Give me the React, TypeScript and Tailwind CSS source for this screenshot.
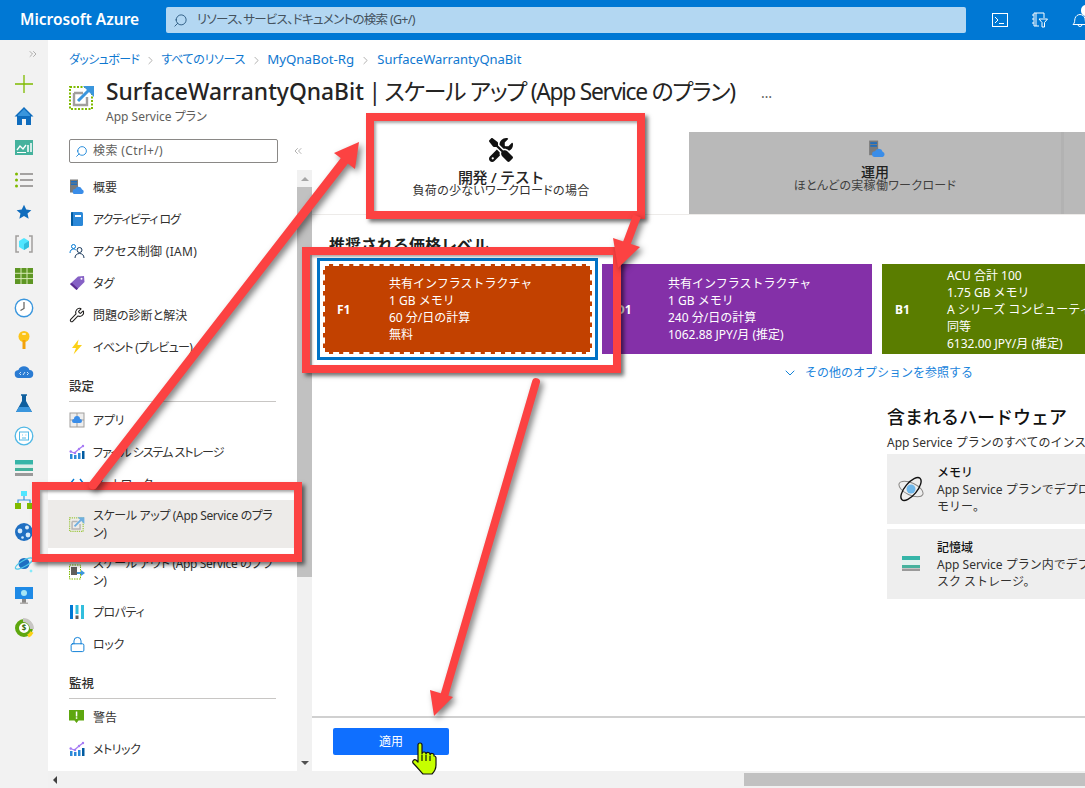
import React from "react";
import { Wrench, Lock, ChevronDown, Search, ChevronsRight, ChevronsLeft, ChevronRight } from "lucide-react";
import { FaScrewdriverWrench } from "react-icons/fa6";

const ScaleIcon = ({ size = 16, dim = false }: { size?: number; dim?: boolean }) => (
  <svg width={size} height={size} viewBox="0 0 26 26" className={dim ? "opacity-70" : ""}>
    <rect x="1" y="3" width="22" height="22" fill="none" stroke="#7fba00" strokeWidth="2" strokeDasharray="2 1.5" />
    <path d="M5 9h9M5 9v12h13v-8" fill="none" stroke="#a19f9d" strokeWidth="2.4" />
    <path d="M9 17L20 6" stroke="#3a96dd" strokeWidth="3" />
    <path d="M14 2h11v11z" fill="#3a96dd" />
  </svg>
);

const ScaleOut = () => (
  <svg width="16" height="16" viewBox="0 0 16 16">
    <rect x="0.5" y="1" width="11" height="14" fill="none" stroke="#7fba00" strokeWidth="1" strokeDasharray="1.5 1" />
    <rect x="2" y="3" width="6" height="8" fill="#605e5c" />
    <path d="M8 9h5" stroke="#3a96dd" strokeWidth="2" />
    <path d="M12 6l4 3-4 3z" fill="#3a96dd" />
  </svg>
);

const CloudServer = ({ size = 16 }: { size?: number }) => (
  <svg width={size} height={size} viewBox="0 0 16 16">
    <rect x="1" y="0.5" width="8" height="13" fill="#7a7a7a" />
    <rect x="2" y="2" width="6" height="1.5" fill="#1b6ec2" />
    <rect x="2" y="4.5" width="6" height="1.5" fill="#1b6ec2" />
    <path d="M6 15a2.5 2.5 0 0 1 .2-5 3.6 3.6 0 0 1 6.8.4A2.4 2.4 0 0 1 13 15z" fill="#3a8de8" />
  </svg>
);

const Chart = () => (
  <svg width="16" height="16" viewBox="0 0 16 16">
    <rect x="1" y="10" width="2.5" height="5" fill="#2b88d8" />
    <rect x="5" y="11" width="2.5" height="4" fill="#2b88d8" />
    <rect x="9" y="9" width="2.5" height="6" fill="#2b88d8" />
    <rect x="13" y="7" width="2.5" height="8" fill="#005ba1" />
    <path d="M1.5 7.5L5.5 9l4.5-4 4-3" fill="none" stroke="#a67af4" strokeWidth="1.2" />
    <circle cx="1.7" cy="7.5" r="1.2" fill="#a67af4" />
    <circle cx="6" cy="9" r="1.2" fill="#a67af4" />
    <circle cx="10" cy="5" r="1.2" fill="#a67af4" />
    <circle cx="14" cy="2" r="1.2" fill="#a67af4" />
  </svg>
);

const menuIcons: Record<string, React.ReactNode> = {
  overview: <CloudServer />,
  log: (
    <svg width="16" height="16" viewBox="0 0 16 16">
      <rect x="2" y="1" width="12" height="14" rx="1.5" fill="#2b88d8" />
      <rect x="2" y="1" width="2" height="14" rx="1" fill="#005ba1" />
      <rect x="6" y="4" width="6" height="2" fill="#fff" />
    </svg>
  ),
  iam: (
    <svg width="16" height="16" viewBox="0 0 16 16" fill="none" stroke="#0078d4" strokeWidth="1">
      <circle cx="4.5" cy="3.5" r="2" />
      <path d="M1 10c0-2.5 1.500-4 3.500-4 1 0 1.700.3 2.300.9" />
      <circle cx="10.500" cy="7" r="2.500" stroke="#1b3a5c" />
      <path d="M6 15c0-3 2-4.500 4.500-4.500S15 12 15 15" stroke="#1b3a5c" />
    </svg>
  ),
  tag: (
    <svg width="16" height="16" viewBox="0 0 16 16">
      <path d="M1 9L9 1.500 15 1l.5 6-8 8z" fill="#8661c5" />
      <path d="M1 9l6.500 6 1.500-1.500L3 8z" fill="#5c2d91" />
      <circle cx="12.500" cy="3.700" r="1" fill="#fff" />
    </svg>
  ),
  wrench: <Wrench size={16} strokeWidth={1.6} color="#201f1e" />,
  bolt: (
    <svg width="16" height="16" viewBox="0 0 16 16">
      <path d="M9.500 0.500L3 9h4l-2.500 6.500L13 6H8.500z" fill="#fcd116" />
    </svg>
  ),
  app: (
    <svg width="16" height="16" viewBox="0 0 16 16">
      <rect x="1" y="1" width="14" height="14" fill="#eee" stroke="#a19f9d" />
      <path d="M1 8h14M8 1v14" stroke="#a19f9d" />
      <path d="M5 11a2 2 0 0 1 0-4 3 3 0 0 1 6 0 2 2 0 0 1 0 4z" fill="#3a8de8" />
    </svg>
  ),
  chart: <Chart />,
  network: (
    <svg width="16" height="16" viewBox="0 0 16 16" fill="none" stroke="#0078d4" strokeWidth="1.400">
      <path d="M5 3L1 8l4 5M11 3l4 5-4 5" />
    </svg>
  ),
  up: <ScaleIcon dim />,
  out: <ScaleOut />,
  props: (
    <svg width="16" height="16" viewBox="0 0 16 16">
      <rect x="1" y="1" width="3" height="14" fill="#0078d4" />
      <rect x="6.500" y="1" width="3" height="9" fill="#32bedd" />
      <rect x="6.500" y="11.500" width="3" height="3.500" fill="#605e5c" />
      <rect x="12" y="1" width="3" height="14" fill="#32bedd" />
    </svg>
  ),
  lock: <Lock size={17} strokeWidth={1.3} color="#0078d4" />,
  alert: (
    <svg width="16" height="16" viewBox="0 0 16 16">
      <path d="M0 1h15v10.500H9.500L7.500 14l-2-2.500H0z" fill="#5ea70f" />
      <rect x="6.800" y="2.500" width="1.500" height="5" fill="#fff" />
      <rect x="6.800" y="8.300" width="1.500" height="1.500" fill="#fff" />
    </svg>
  ),
};

type MenuEntry = { heading?: string; label?: string; icon?: string; active?: boolean; two?: boolean; tr?: string };

const menu: MenuEntry[] = [
  { label: "概要", icon: "overview" },
  { label: "アクティビティ ログ", icon: "log", tr: "tracking-[-1px]" },
  { label: "アクセス制御 (IAM)", icon: "iam", tr: "tracking-[0.3px]" },
  { label: "タグ", icon: "tag" },
  { label: "問題の診断と解決", icon: "wrench" },
  { label: "イベント (プレビュー)", icon: "bolt", tr: "tracking-[-0.7px]" },
  { heading: "設定" },
  { label: "アプリ", icon: "app", tr: "tracking-[-0.3px]" },
  { label: "ファイル システム ストレージ", icon: "chart", tr: "tracking-[-1px]" },
  { label: "ネットワーク", icon: "network", tr: "tracking-[-0.7px]" },
  { label: "スケール アップ (App Service のプラ\nン)", icon: "up", active: true, two: true, tr: "tracking-[-0.35px]" },
  { label: "スケール アウト (App Service のプラ\nン)", icon: "out", two: true, tr: "tracking-[-0.35px]" },
  { label: "プロパティ", icon: "props", tr: "tracking-[-0.5px]" },
  { label: "ロック", icon: "lock", tr: "tracking-[-0.3px]" },
  { heading: "監視" },
  { label: "警告", icon: "alert" },
  { label: "メトリック", icon: "chart", tr: "tracking-[-0.5px]" },
];

const railIcons: React.ReactNode[] = [
  <svg width="20" height="20" viewBox="0 0 20 20"><path d="M10 1v18M1 10h18" stroke="#7fba00" strokeWidth="1.300" /></svg>,
  <svg width="20" height="20" viewBox="0 0 20 20"><path d="M10 1L0.500 10.500H3V19h5v-6h4v6h5v-8.500h2.500z" fill="#0f6cbd" /><path d="M10 3L4 9v1h12V9z" fill="#3a96dd" /></svg>,
  <svg width="20" height="20" viewBox="0 0 20 20"><rect x="1" y="2" width="18" height="15" fill="#45b29d" /><path d="M3 12l3-4 3 3 3-4" fill="none" stroke="#fff" strokeWidth="1.300" /><path d="M14 7v7M17 5v9" stroke="#fff" strokeWidth="1.500" /><rect x="3" y="14" width="9" height="1" fill="#fff" /></svg>,
  <svg width="20" height="20" viewBox="0 0 20 20"><circle cx="2.500" cy="4" r="1.500" fill="#7fba00" /><circle cx="2.500" cy="10" r="1.500" fill="#7fba00" /><circle cx="2.500" cy="16" r="1.500" fill="#7fba00" /><path d="M6 4h13M6 10h13M6 16h13" stroke="#8a8886" strokeWidth="1.500" /></svg>,
  <svg width="16" height="16" viewBox="0 0 20 20"><path d="M10 1l2.800 6 6.400.7-4.800 4.300 1.400 6.400L10 15.100l-5.800 3.300L5.600 12 .8 7.700 7.200 7z" fill="#0f6cbd" /></svg>,
  <svg width="20" height="20" viewBox="0 0 20 20"><path d="M5 2H2v16h3M15 2h3v16h-3" fill="none" stroke="#a19f9d" strokeWidth="1.500" /><path d="M10 4l5 3v6l-5 3-5-3V7z" fill="#50e6ff" /><path d="M10 10l5-3v6l-5 3z" fill="#32bedd" /></svg>,
  <svg width="20" height="20" viewBox="0 0 20 20"><rect x="1" y="2" width="18" height="16" fill="#5e9624" /><path d="M7 2v16M13 2v16M1 7.300h18M1 12.600h18" stroke="#d6eab4" /></svg>,
  <svg width="20" height="20" viewBox="0 0 20 20"><circle cx="10" cy="10" r="8.700" fill="#fff" stroke="#3a96dd" strokeWidth="1.400" /><path d="M10 4v6.500L6.500 12.500" fill="none" stroke="#605e5c" strokeWidth="1.200" /></svg>,
  <svg width="20" height="20" viewBox="0 0 20 20"><circle cx="10" cy="6.500" r="5.500" fill="#fcc419" /><rect x="8.500" y="10" width="3" height="9" fill="#f2a20c" /><rect x="8" y="3" width="4" height="2" rx="1" fill="#fff1b8" /></svg>,
  <svg width="20" height="20" viewBox="0 0 20 20"><path d="M5 16a4 4 0 0 1-.6-8A6 6 0 0 1 15.500 8 4 4 0 0 1 15 16z" fill="#2b7cd3" /><path d="M7 10l-1.500 1.500L7 13M13 10l1.500 1.500L13 13M9 13l2-3" fill="none" stroke="#cfe6fa" /></svg>,
  <svg width="20" height="20" viewBox="0 0 20 20"><path d="M8 1h4v6l6 11H2L8 7z" fill="#0f5f9e" /><path d="M5 13h10l3 5H2z" fill="#3a96dd" /><path d="M7 1h6" stroke="#0f5f9e" strokeWidth="1.500" /></svg>,
  <svg width="20" height="20" viewBox="0 0 20 20"><circle cx="10" cy="10" r="8.800" fill="#fff" stroke="#50b8e6" strokeWidth="1.300" /><rect x="5.500" y="6" width="9" height="8" fill="none" stroke="#50b8e6" /><path d="M8 9h.8M11.500 9h.8M8 12h4" stroke="#50b8e6" /></svg>,
  <svg width="20" height="20" viewBox="0 0 20 20"><rect x="1" y="2" width="18" height="4.500" fill="#36b5a8" /><rect x="1" y="7" width="18" height="5" fill="#dceee9" /><rect x="1" y="10" width="18" height="3" fill="#45b29d" /><rect x="1" y="15" width="18" height="3" fill="#9a9a9a" /></svg>,
  <svg width="20" height="20" viewBox="0 0 20 20"><rect x="7" y="1" width="6" height="5" fill="#50e6ff" /><path d="M10 6v4M4 13v-3h12v3" fill="none" stroke="#3a96dd" strokeWidth="1.200" /><rect x="1" y="13" width="6" height="6" fill="#7fba00" /><rect x="13" y="13" width="6" height="6" fill="#7fba00" /></svg>,
  <svg width="20" height="20" viewBox="0 0 20 20"><circle cx="10" cy="10" r="9" fill="#1f6fc2" /><circle cx="6" cy="9" r="2.400" fill="#d7ebfb" /><circle cx="13" cy="5.500" r="2" fill="#d7ebfb" /><circle cx="14" cy="13" r="2.400" fill="#d7ebfb" /><circle cx="8.500" cy="15.500" r="1.300" fill="#d7ebfb" /></svg>,
  <svg width="20" height="20" viewBox="0 0 20 20"><circle cx="10" cy="9.500" r="5.500" fill="#1f6fc2" /><ellipse cx="10" cy="9.500" rx="9.800" ry="3" fill="none" stroke="#50c8ea" strokeWidth="1.200" transform="rotate(-30 10 9.500)" /><path d="M17 15l.5 1.500L19 17l-1.500.5L17 19l-.5-1.500L15 17l1.500-.5z" fill="#50e6ff" /></svg>,
  <svg width="20" height="20" viewBox="0 0 20 20"><rect x="1" y="1" width="18" height="12" fill="#1e8ae6" /><circle cx="10" cy="7" r="3" fill="#a5e6f5" /><rect x="8" y="13" width="4" height="4" fill="#8a8886" /><rect x="6" y="16.500" width="8" height="1.500" fill="#b0aeac" /></svg>,
  <svg width="20" height="20" viewBox="0 0 20 20"><circle cx="10" cy="10" r="7" fill="#fff" stroke="#5ea70f" strokeWidth="4" /><path d="M10 1a9 9 0 0 1 9 9" fill="none" stroke="#c8c6c4" strokeWidth="4" transform="translate(-1 1)" /><path d="M18 14a9 9 0 0 1-4 4" fill="none" stroke="#fcd116" strokeWidth="3.500" /><text x="10" y="13" textAnchor="middle" fontSize="8" fontWeight="700" fill="#3b6e0a">$</text></svg>,
];

const Line = ({ children }: { children: React.ReactNode }) => <div className="whitespace-nowrap">{children}</div>;

const Tier = ({ code, lines, color, selected, leftPad }: { code: string; lines: string[]; color: string; selected?: boolean; leftPad: string }) => (
  <div className={`${color} h-[90px] flex items-center text-white text-[12px] leading-[17px] ${selected ? "border-2 border-dashed border-white w-[269px]" : ""} ${leftPad}`}>
    <div className="w-[52px] font-bold shrink-0">{code}</div>
    <div>
      {lines.map((l) => (
        <Line key={l}>{l}</Line>
      ))}
    </div>
  </div>
);

const Hw = ({ icon, title, l1, l2 }: { icon: React.ReactNode; title: string; l1: string; l2: string }) => (
  <div className="h-[70px] bg-[#eeeeee] flex items-center w-[500px] text-[12px] leading-[17px] text-[#323130]">
    <div className="w-[50px] flex justify-center pr-[2px] shrink-0">{icon}</div>
    <div>
      <div className="text-[#111] font-medium">{title}</div>
      <Line>{l1}</Line>
      <Line>{l2}</Line>
    </div>
  </div>
);

const Red = ({ cls }: { cls: string }) => (
  <div className={`absolute border-[8px] border-[#fc4242] shadow-[3px_3px_4px_rgba(0,0,0,0.55),inset_2px_2px_3px_rgba(0,0,0,0.35)] ${cls}`} />
);

export default function App() {
  return (
    <div
      className="relative w-[1085px] h-[788px] overflow-hidden flex flex-col bg-white text-[#323130] text-[12px] [font-feature-settings:'palt']"
      style={{ fontFamily: '"Noto Sans", "Noto Sans CJK JP", sans-serif' }}
    >
      {/* top bar */}
      <header className="h-10 shrink-0 bg-[#0078d4] flex items-center pl-5 text-white">
        <div className="w-[146px] shrink-0 text-[15.5px] font-semibold whitespace-nowrap">Microsoft Azure</div>
        <div className="w-[800px] h-[26px] shrink-0 bg-[#b3d7f2] rounded-[2px] flex items-center pl-[7px] gap-[9px] text-[#44525e] text-[12.5px] tracking-[-0.7px]">
          <Search size={15} strokeWidth={1.4} color="#24527a" className="-scale-x-100" />
          <span>リソース、サービス、ドキュメントの検索 (G+/)</span>
        </div>
        <div className="flex items-center gap-6 ml-[26px] shrink-0">
          <svg width="16" height="14" viewBox="0 0 16 14" fill="none" stroke="#fff">
            <rect x="0.500" y="0.500" width="15" height="13" />
            <path d="M3 4l3 3-3 3M7 10.500h5" />
          </svg>
          <svg width="16" height="16" viewBox="0 0 16 16" fill="none" stroke="#fff">
            <path d="M2 1h10v5M2 1v13h5M4 1v13M0 3h2M0 7h2M0 11h2" />
            <path d="M7 7h8.500l-3 3.500V15H10v-4.500z" />
          </svg>
          <svg width="16" height="16" viewBox="0 0 16 16" fill="none" stroke="#fff">
            <path d="M1 12.500c2-1.500 1.500-4 2-6C3.500 4 6 2.500 8 2.500s4.500 1.500 5 4 0 4.500 2 6zM6 12.500a2 2 0 0 0 4 0" />
          </svg>
        </div>
      </header>
      <div className="absolute top-[5px] left-[1081px] w-[10px] h-[11px] rounded-full bg-white" />

      <div className="flex flex-1 min-h-0">
        {/* rail */}
        <aside className="w-12 shrink-0 bg-[#f2f2f2] flex flex-col items-center">
          <div className="h-[28px] w-full flex items-center justify-end pr-[9px]">
            <ChevronsRight size={12} color="#8a8886" strokeWidth={1.3} />
          </div>
          {railIcons.map((ic, i) => (
            <div key={i} className="h-8 w-full flex items-center justify-center shrink-0">
              {ic}
            </div>
          ))}
        </aside>

        {/* blade */}
        <main className="flex-1 min-w-0 flex flex-col">
          <div className="h-[91px] shrink-0 pl-[21px] pt-[12px] relative">
            <nav className="flex items-center h-4 text-[#0f78d0] whitespace-nowrap">
              <span className="text-[12px] tracking-[-0.6px]">ダッシュボード</span>
              <ChevronRight size={13} color="#8a8886" className="mx-[4.5px]" strokeWidth={1.2} />
              <span className="text-[12px] tracking-[-0.3px]">すべてのリソース</span>
              <ChevronRight size={13} color="#8a8886" className="mx-[4.5px]" strokeWidth={1.2} />
              <span className="text-[13.3px]">MyQnaBot-Rg</span>
              <ChevronRight size={13} color="#8a8886" className="mx-[5px]" strokeWidth={1.2} />
              <span className="text-[13px]">SurfaceWarrantyQnaBit</span>
            </nav>
            <div className="flex items-start mt-[10px]">
              <div className="w-[37px] pt-[6px] shrink-0">
                <ScaleIcon size={26} />
              </div>
              <div>
                <div className="flex items-center h-[28px] whitespace-nowrap">
                  <h1 className="text-[22.8px] leading-[28px] text-[#252423]">
                    <span className="font-medium">SurfaceWarrantyQnaBit</span>
                    <span className="tracking-[-1.27px]"> | スケール アップ (App Service のプラン)</span>
                  </h1>
                  <span className="ml-[26px] text-[14px] text-[#605e5c] tracking-[1px]">…</span>
                </div>
                <div className="text-[12px] leading-[16px] text-[#605e5c] mt-[3px]">App Service プラン</div>
              </div>
            </div>
          </div>

          <div className="flex flex-1 min-h-0">
            {/* menu column */}
            <div className="w-[264px] shrink-0 flex flex-col">
              <div className="h-[39px] shrink-0 flex items-start pt-2 pl-[21px] gap-[14px]">
                <div className="w-[209px] h-6 border border-[#8a8886] rounded-[2px] flex items-center pl-[5px] gap-[5px] text-[#605e5c] tracking-[0.4px]">
                  <Search size={13} strokeWidth={1.5} color="#0078d4" className="-scale-x-100" />
                  <span>検索 (Ctrl+/)</span>
                </div>
                <ChevronsLeft size={12} color="#8a8886" className="mt-[6px]" strokeWidth={1.3} />
              </div>
              <div className="flex flex-1 min-h-0">
                <div className="w-[249px] shrink-0 overflow-hidden pt-px">
                  {menu.map((m, i) =>
                    m.heading ? (
                      <div key={i} className="h-[39px] mx-[21px] mb-[2px] flex items-end pb-[4px] border-b border-[#c8c6c4] text-[12.5px] font-medium text-[#323130]">
                        {m.heading}
                      </div>
                    ) : (
                      <div
                        key={i}
                        className={`flex items-center pl-[21px] ${m.two ? "h-12" : "h-8"} ${m.active ? "bg-[#edebe9]" : ""}`}
                      >
                        <div className="w-6 shrink-0 flex items-center">{menuIcons[m.icon as string]}</div>
                        <div className={`text-[12px] leading-[17px] whitespace-pre-line text-[#323130] ${m.tr ?? ""}`}>{m.label}</div>
                      </div>
                    )
                  )}
                </div>
                <div className="w-[15px] shrink-0 bg-[#f1f1f1] flex flex-col items-center">
                  <div className="h-[17px] flex items-center justify-center shrink-0">
                    <div className="w-0 h-0 border-x-[4px] border-x-transparent border-b-[4px] border-b-[#a6a6a6]" />
                  </div>
                  <div className="w-full h-[390px] bg-[#c1c1c1] shrink-0" />
                  <div className="flex-1" />
                  <div className="h-[17px] flex items-center justify-center shrink-0">
                    <div className="w-0 h-0 border-x-[4px] border-x-transparent border-t-[4px] border-t-[#505050]" />
                  </div>
                </div>
              </div>
            </div>

            {/* content */}
            <section className="flex-1 min-w-0 flex flex-col [font-feature-settings:normal]">
              <div className="flex h-[84px] shrink-0 border-b border-[#edebe9] pl-px">
                <div className="w-[376px] shrink-0 flex flex-col items-center pt-[7px]">
                  <FaScrewdriverWrench size={24} color="#111" />
                  <div className="text-[15px] leading-[16px] font-medium text-[#252423] mt-[7px] tracking-[-0.3px]">開発 / テスト</div>
                  <div className="text-[12px] leading-[14px] text-[#323130] -mt-[1px] tracking-[0.3px] [font-feature-settings:'palt']">負荷の少ないワークロードの場合</div>
                </div>
                <div className="w-[372px] shrink-0 flex flex-col items-center pt-[8px] mt-px bg-[#b9b9b9]">
                  <div className="ml-1"><CloudServer size={18} /></div>
                  <div className="text-[14px] leading-[16px] text-[#201f1e] font-medium mt-[6px]">運用</div>
                  <div className="text-[12px] leading-[14px] text-[#403f3e] -mt-[1px] whitespace-nowrap tracking-[0.3px] [font-feature-settings:'palt']">ほとんどの実稼働ワークロード</div>
                </div>
                <div className="flex-1 mt-px bg-[#b9b9b9] border-l-[3px] border-[#b2b2b2]" />
              </div>

              <div className="flex-1 min-h-0 overflow-hidden">
                <h2 className="ml-[17px] mt-[20px] text-[16px] leading-[20px] font-bold text-[#201f1e]">推奨される価格レベル</h2>
                <div className="flex items-center mt-[3px] ml-[5px]">
                  <div className="border-[3px] border-[#0072c6] p-[3px] shrink-0">
                    <Tier
                      code="F1"
                      color="bg-[#c24100]"
                      selected
                      leftPad="pl-[12px]"
                      lines={["共有インフラストラクチャ", "1 GB メモリ", "60 分/日の計算", "無料"]}
                    />
                  </div>
                  <div className="w-[270px] ml-[4px] shrink-0">
                    <Tier
                      code="D1"
                      color="bg-[#8430a8]"
                      leftPad="pl-[14px]"
                      lines={["共有インフラストラクチャ", "1 GB メモリ", "240 分/日の計算", "1062.88 JPY/月 (推定)"]}
                    />
                  </div>
                  <div className="w-[300px] ml-[10px] shrink-0">
                    <Tier
                      code="B1"
                      color="bg-[#5a7d00]"
                      leftPad="pl-[13px]"
                      lines={["ACU 合計 100", "1.75 GB メモリ", "A シリーズ コンピューティング", "同等", "6132.00 JPY/月 (推定)"]}
                    />
                  </div>
                </div>
                <div className="flex items-center ml-[470px] mt-[3px] h-[20px] gap-[7px] text-[12px] text-[#1b84dc] whitespace-nowrap">
                  <ChevronDown size={16} strokeWidth={1.4} color="#0078d4" />
                  <span>その他のオプションを参照する</span>
                </div>
                <div className="ml-[575px] mt-[22px]">
                  <h3 className="text-[18px] leading-[24px] font-medium text-[#111]">含まれるハードウェア</h3>
                  <div className="mt-[6px] leading-[16px] whitespace-nowrap">App Service プランのすべてのインスタンスで利用できるハードウェア</div>
                  <div className="flex flex-col gap-[5px] mt-[3px]">
                    <Hw
                      title="メモリ"
                      l1="App Service プランでデプロイされたすべてのアプリで共有される専用のメ"
                      l2="モリー。"
                      icon={
                        <svg width="26" height="26" viewBox="0 0 26 26" fill="none">
                          <ellipse cx="13" cy="13" rx="13" ry="6" stroke="#8a8886" transform="rotate(25 13 13)" />
                          <circle cx="13" cy="13" r="4.500" fill="#6fb7ea" />
                          <ellipse cx="13" cy="13" rx="14" ry="6" stroke="#111" strokeWidth="1.400" transform="rotate(-50 13 13)" />
                        </svg>
                      }
                    />
                    <Hw
                      title="記憶域"
                      l1="App Service プラン内でデプロイされたすべてのアプリで共有される専用のディ"
                      l2="スク ストレージ。"
                      icon={
                        <svg width="18" height="16" viewBox="0 0 18 16">
                          <rect width="18" height="4" fill="#36b5a8" />
                          <rect y="4" width="18" height="5" fill="#e1f2ee" />
                          <rect y="9" width="18" height="3" fill="#45b29d" />
                          <rect y="12.500" width="18" height="2.500" fill="#9a9a9a" />
                        </svg>
                      }
                    />
                  </div>
                </div>
              </div>

              <div className="h-[55px] shrink-0 border-t-2 border-[#d0d0d0] pl-[21px] pt-[10px]">
                <button className="w-[116px] h-[27px] rounded-[2px] bg-[#0f6fff] text-white text-[12px]">適用</button>
              </div>
            </section>
          </div>

          {/* bottom scrollbar */}
          <div className="h-[17px] shrink-0 bg-[#f1f1f1] flex items-center">
            <div className="w-0 h-0 ml-[5px] border-y-[4px] border-y-transparent border-r-[4px] border-r-[#404040]" />
            <div className="ml-auto w-[341px] h-[13px] bg-[#c1c1c1]" />
          </div>
        </main>
      </div>

      {/* annotations laid over the page */}
      <Red cls="left-[366px] top-[113px] w-[279px] h-[106px]" />
      <Red cls="left-[302px] top-[247px] w-[319px] h-[126px] border-[7px]" />
      <Red cls="left-[32px] top-[482px] w-[270px] h-[80px]" />
      <svg width="1085" height="788" viewBox="0 0 1085 788" className="absolute left-0 top-0 pointer-events-none drop-shadow-[3px_3px_3px_rgba(0,0,0,0.5)]">
        <path d="M93 485L345 160" stroke="#fc4242" strokeWidth="9" strokeLinecap="round" fill="none" />
        <path d="M359 142L334 153 355 169z" fill="#fc4242" />
        <path d="M637 216L622 256" stroke="#fc4242" strokeWidth="8" fill="none" />
        <path d="M618 268L640 247 613 238z" fill="#fc4242" />
        <path d="M536 382L443 700" stroke="#fc4242" strokeWidth="8" strokeLinecap="round" fill="none" />
        <path d="M434 716L430 690 453 697z" fill="#fc4242" />
      </svg>
      {/* hand pointer */}
      <svg width="28" height="34" viewBox="0 0 28 34" className="absolute left-[410px] top-[742px]">
        <path
          d="M8 3a2 2 0 0 1 4 0v9a2 2 0 0 1 4 0 2 2 0 0 1 4 1 2 2 0 0 1 4 1c1 0 2 1 2 2v7c0 4-2 7-4 9h-9c-2-2-5-6-10-11-1-2 1-4 3-3l2 2z"
          fill="#c6ff00"
          stroke="#111"
          strokeWidth="1.200"
          strokeLinejoin="round"
        />
        <path d="M12 13v6M16 13v6M20 14v5" stroke="#111" strokeWidth="1.200" />
      </svg>
    </div>
  );
}
